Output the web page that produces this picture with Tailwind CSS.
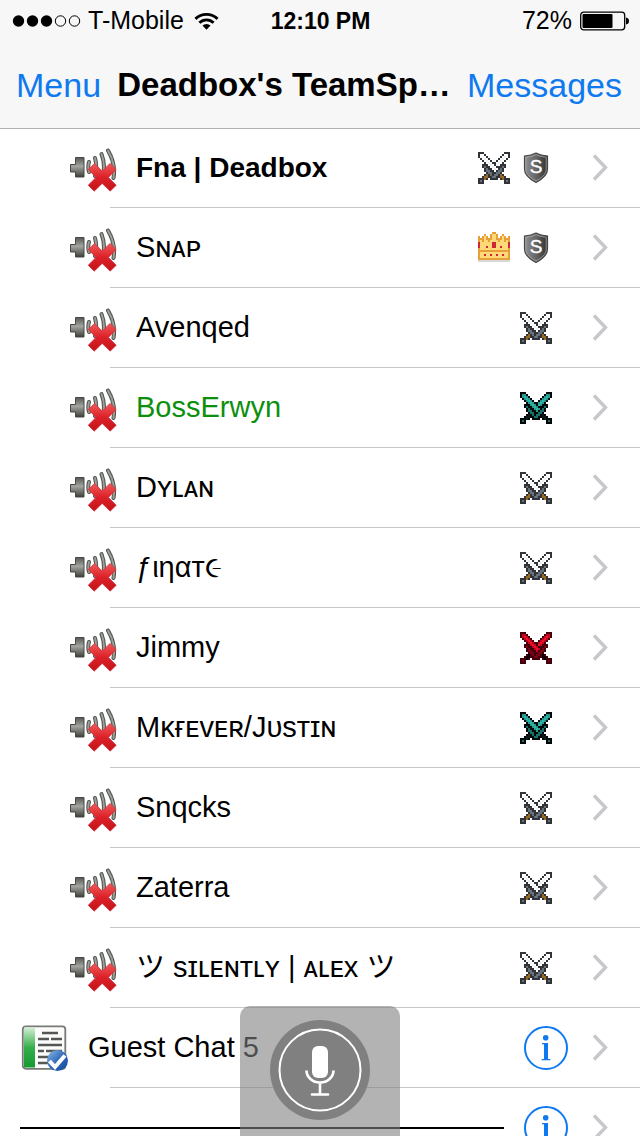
<!DOCTYPE html>
<html lang="en">
<head>
<meta charset="utf-8">
<meta name="viewport" content="width=device-width, initial-scale=1">
<title>Deadbox's TeamSpeak</title>
<script src="https://cdn.jsdelivr.net/npm/@tailwindcss/browser@4"></script>
</head>
<body class="bg-white text-black font-['Liberation_Sans','Noto_Sans','Noto_Sans_CJK_JP',sans-serif]">
<svg class="absolute size-0" aria-hidden="true">
  <defs>
    <linearGradient id="metal" x1="0" y1="0" x2="0" y2="1"><stop offset="0" stop-color="#555852"/><stop offset=".45" stop-color="#a3a69f"/><stop offset="1" stop-color="#3c3f3a"/></linearGradient>
    <linearGradient id="cross" x1="0" y1="0" x2="0" y2="1"><stop offset="0" stop-color="#ee5a5a"/><stop offset=".5" stop-color="#dc2028"/><stop offset="1" stop-color="#c4121a"/></linearGradient>
    <linearGradient id="shieldfill" x1="0" y1="0" x2="1" y2="0"><stop offset="0" stop-color="#909090"/><stop offset=".5" stop-color="#666"/><stop offset="1" stop-color="#303030"/></linearGradient>
    <linearGradient id="greenfill" x1="0" y1="0" x2="0" y2="1"><stop offset="0" stop-color="#d3f0d6"/><stop offset=".5" stop-color="#35ae4b"/><stop offset="1" stop-color="#159a31"/></linearGradient>
    <linearGradient id="bluefill" x1="0" y1="0" x2="1" y2="1"><stop offset="0" stop-color="#8db9e8"/><stop offset=".55" stop-color="#2a66b8"/><stop offset="1" stop-color="#164a99"/></linearGradient>
  </defs>
  <symbol id="muted" viewBox="0 0 48 48">
    <path d="M.5 20.500h5v-7h8.500v19.500h-8.500v-5h-5z" fill="url(#metal)" stroke="#454843"/>
    <g fill="none" stroke-linecap="round">
      <g stroke="#50534e" stroke-width="4"><path d="M19 18q-1.500 5 0 10M25 14q2.500 9 0 18M31.500 10q5 13 0 26M38 6.500Q46 20 43.500 34"/></g>
      <g stroke="#9c9f99" stroke-width="2"><path d="M19 18q-1.500 5 0 10M25 14q2.500 9 0 18M31.500 10q5 13 0 26M38 6.500Q46 20 43.500 34"/></g>
    </g>
    <path d="M24.500 19.500l7.700 7.700 7.700-7.700 6.300 6-7.800 7.900 7.800 7.800-6 6-8-7.800-8 7.800-6-6 7.800-7.800-7.800-7.900z" fill="url(#cross)" stroke="#d83038" stroke-width=".8"/>
  </symbol>
  <symbol id="chevron" viewBox="0 0 16 28"><path d="M2 1.500L13.500 13.500 2 25.500" fill="none" stroke="#c7c7cc" stroke-width="3.400"/></symbol>
  <symbol id="info" viewBox="0 0 44 44">
    <circle cx="22" cy="22" r="21" fill="none" stroke="#0f79f0" stroke-width="2"/>
    <circle cx="21.700" cy="11.700" r="2.800" fill="#0f79f0"/>
    <path d="M18 17h6v16h2.300v1.200h-8.600V33H20V18.200h-2z" fill="#0f79f0"/>
  </symbol>
</svg>

<div class="relative flex h-screen flex-col overflow-hidden">
  <header class="relative z-10 shrink-0 border-b border-[#b2b2b2] bg-[#f7f7f7]">
    <div class="grid h-[42px] grid-cols-[1fr_auto_1fr] items-center pl-3 pr-[11px] text-[25px]">
      <div class="flex items-center gap-[6px]">
        <svg class="h-[14px] w-[70px]" viewBox="0 0 70 14" aria-label="Signal: 3 of 5">
          <circle cx="6.500" cy="7" r="5.700"/><circle cx="20.500" cy="7" r="5.700"/><circle cx="34.500" cy="7" r="5.700"/>
          <g fill="none" stroke="#000"><circle cx="48.500" cy="7" r="5.200"/><circle cx="62.500" cy="7" r="5.200"/></g>
        </svg>
        <span>T-Mobile</span>
        <svg class="ml-1 h-[18px] w-[25px]" viewBox="0 0 26 18" aria-label="Wi-Fi">
          <g fill="none" stroke="#000" stroke-width="3"><path d="M1.500 6.800a16.300 16.300 0 0 1 23 0M5.600 10.900a10.500 10.500 0 0 1 14.800 0"/></g>
          <path d="M8.800 13.800a6 6 0 0 1 8.400 0L13 18z"/>
        </svg>
      </div>
      <time class="text-[23px] font-bold">12:10 PM</time>
      <div class="flex items-center justify-end gap-2">
        <span>72%</span>
        <svg class="h-5 w-[49px]" viewBox="0 0 49 20" aria-label="Battery">
          <rect x=".700" y="1.200" width="44" height="17.600" rx="3" fill="none" stroke="#000" stroke-width="1.300"/>
          <rect x="2.500" y="3" width="30" height="14" rx="1"/><path d="M46 6.500q3 .5 3 3.500t-3 3.500z"/>
        </svg>
      </div>
    </div>
    <nav class="flex h-[86px] items-center justify-between pr-[18px] pl-4 text-[34px]">
      <a href="#menu" class="text-[#0f79f0]">Menu</a>
      <h1 class="text-[33px] font-bold whitespace-nowrap">Deadbox's TeamSp…</h1>
      <a href="#messages" class="text-[#0f79f0]">Messages</a>
    </nav>
  </header>

  <main class="-mt-px text-[29px]">
    <ul id="members"></ul>
    <div class="relative flex h-20 items-center pr-8 pb-px pl-5 after:absolute after:right-0 after:bottom-0 after:left-[110px] after:h-px after:bg-[#c8c7cc]">
      <svg class="size-12 shrink-0" viewBox="0 0 48 48" aria-hidden="true">
        <rect x="2.800" y="2.300" width="42.500" height="42.500" rx="3" fill="#fcfcfc" stroke="#777a75" stroke-width="1.800"/>
        <path d="M4 3.500h11v40H4z" fill="url(#greenfill)"/>
        <path d="M22 9h16M18 15h11m2 0h11M18 21h24M18 27h6m2 0h16M18 33h12M18 39h10" stroke="#555852" stroke-width="2.600"/>
        <circle cx="37.500" cy="36.500" r="10.500" fill="url(#bluefill)"/>
        <path d="M29.500 37l5.500 6 10-11.500" fill="none" stroke="#fff" stroke-width="4"/>
      </svg>
      <a href="#guest" class="ml-5 flex-1">Guest Chat 5</a>
      <button type="button" aria-label="Guest Chat info" class="mr-6"><svg class="size-11"><use href="#info"/></svg></button>
      <svg class="h-7 w-4" aria-hidden="true"><use href="#chevron"/></svg>
    </div>
    <div class="flex h-20 items-center pr-8 pb-px pl-5">
      <hr class="mr-5 h-[2px] flex-1 border-0 bg-black">
      <button type="button" aria-label="Channel info" class="mr-6"><svg class="size-11"><use href="#info"/></svg></button>
      <svg class="h-7 w-4" aria-hidden="true"><use href="#chevron"/></svg>
    </div>
  </main>

  <button type="button" aria-label="Push to talk" class="absolute bottom-0 left-1/2 z-20 flex h-[130px] w-40 -translate-x-1/2 items-center justify-center rounded-t-[10px] bg-[#808080]/60 pb-[2px]">
    <svg class="size-[100px]" viewBox="0 0 100 100">
      <circle cx="50" cy="50" r="50" fill="#808080"/>
      <g fill="none" stroke="#fff" stroke-width="2"><circle cx="50" cy="50" r="40.500"/><path d="M36.500 50.500a13.500 12 0 0 0 27 0M50 63v12"  stroke-width="2.600"/><path d="M42 74.500h16" stroke-width="2.600" stroke-linecap="round"/></g>
      <rect x="42" y="26" width="16" height="32" rx="6" fill="#fff"/>
    </svg>
  </button>
</div>

<script>
const sword = [
  '###.............',
  '#ww#............',
  '#wlw#...........',
  '.#wlw#..........',
  '..#wlw#.........',
  '...#wlw#........',
  '....#wlw#...##..',
  '.....#wlw#.#g#..',
  '......#wlw#g#...',
  '.......#w#gg#...',
  '........#gg#....',
  '.......#gg#h#...',
  '......#gg##hh#..',
  '......###..#h###',
  '.............#g#',
  '.............###'];
const crown = [
  '.......oo.......',
  '...o..oyyo..o...',
  'o.oyo.oyyo.oyo.o',
  'oooyoooyyoooyooo',
  'oyoyyoyyyyoyyoyo',
  'ryyyyyyrryyyyyyr',
  'ryyyyyyrryyyyyyr',
  'ryyyryyrryyryyyr',
  'oyyyyyyyyyyyyyyo',
  'oooooooooooooooo',
  'oyyyyyyyyyyyyyyo',
  'oyyryyryyryyryyo',
  'oyyyyyyyyyyyyyyo',
  'oooooooooooooooo',
  'ssssssssssssssss',
  '................'];
const mirror = rows => rows.map(row => [...row].reverse().join(''));
const palettes = {
  iron: {'#':'#303438', w:'#ffffff', l:'#f0f0f0', g:'#68717a', h:'#9a6a22'},
  teal: {'#':'#050808', w:'#249a90', l:'#2fb5a8', g:'#147068', h:'#0a1c1c'},
  red: {'#':'#42000c', w:'#c8041c', l:'#ee1430', g:'#780416', h:'#140004'},
  crown: {o:'#e5a03a', y:'#ffd978', r:'#cf2638', s:'#d8d8d8'}
};
function pixels(layers, colors) {
  let out = '';
  layers.forEach(rows => rows.forEach((row, y) => [...row].forEach((c, x) => {
    if (colors[c]) out += `<rect x="${x}" y="${y}" width="1" height="1" fill="${colors[c]}"/>`;
  })));
  return `<svg class="size-8" viewBox="0 0 16 16" shape-rendering="crispEdges" aria-hidden="true">${out}</svg>`;
}
const shield = `<svg class="size-8" viewBox="0 0 32 32" role="img" aria-label="Server group">
  <path d="M16 1c3.500 1.700 7.500 2.600 11.500 3v13c0 6-5 10-11.500 13.500C9.500 27 4.500 23 4.500 17V4C8.500 3.600 12.500 2.700 16 1z" fill="url(#shieldfill)" stroke="#444" stroke-width="1.200"/>
  <path d="M16 2.600c3.300 1.500 6.700 2.300 10.200 2.600v12c0 5-4.400 8.700-10.200 11.800C10.200 25.900 5.800 22.200 5.800 17.200v-12C9.300 4.900 12.700 4.100 16 2.600z" fill="none" stroke="#aaa" stroke-width=".8"/>
  <text x="16" y="21" text-anchor="middle" font-size="19" fill="#fff" stroke="#fff" stroke-width=".4">S</text>
</svg>`;
const members = [
  ['Fna | Deadbox', 'iron', true, 'text-[28px] font-bold'],
  ['Sɴᴀᴘ', 'crown', true, ''],
  ['Avenqed', 'iron', false, ''],
  ['BossErwyn', 'teal', false, 'text-[#0c8f0c]'],
  ['Dʏʟᴀɴ', 'iron', false, ''],
  ['ƒιηαт૯', 'iron', false, ''],
  ['Jimmy', 'red', false, ''],
  ['Mᴋғᴇᴠᴇʀ/Jᴜsᴛɪɴ', 'teal', false, ''],
  ['Snqcks', 'iron', false, ''],
  ['Zaterra', 'iron', false, ''],
  ['ツ sɪʟᴇɴᴛʟʏ | ᴀʟᴇx ツ', 'iron', false, '']
];
document.getElementById('members').innerHTML = members.map(([name, badge, server, style]) => `
  <li class="relative after:absolute after:right-0 after:bottom-0 after:left-[110px] after:h-px after:bg-[#c8c7cc]">
    <a href="#member" class="flex h-20 items-center pr-8 pb-px pl-[70px]">
      <svg class="size-12 shrink-0" aria-hidden="true"><use href="#muted"/></svg>
      <span class="ml-[18px] flex-1 whitespace-nowrap ${style}">${name}</span>
      <span class="mr-10 flex gap-[10px]">${pixels(badge === 'crown' ? [crown] : [mirror(sword), sword], palettes[badge])}${server ? shield : ''}</span>
      <svg class="h-7 w-4" aria-hidden="true"><use href="#chevron"/></svg>
    </a>
  </li>`).join('');
</script>
</body>
</html>
